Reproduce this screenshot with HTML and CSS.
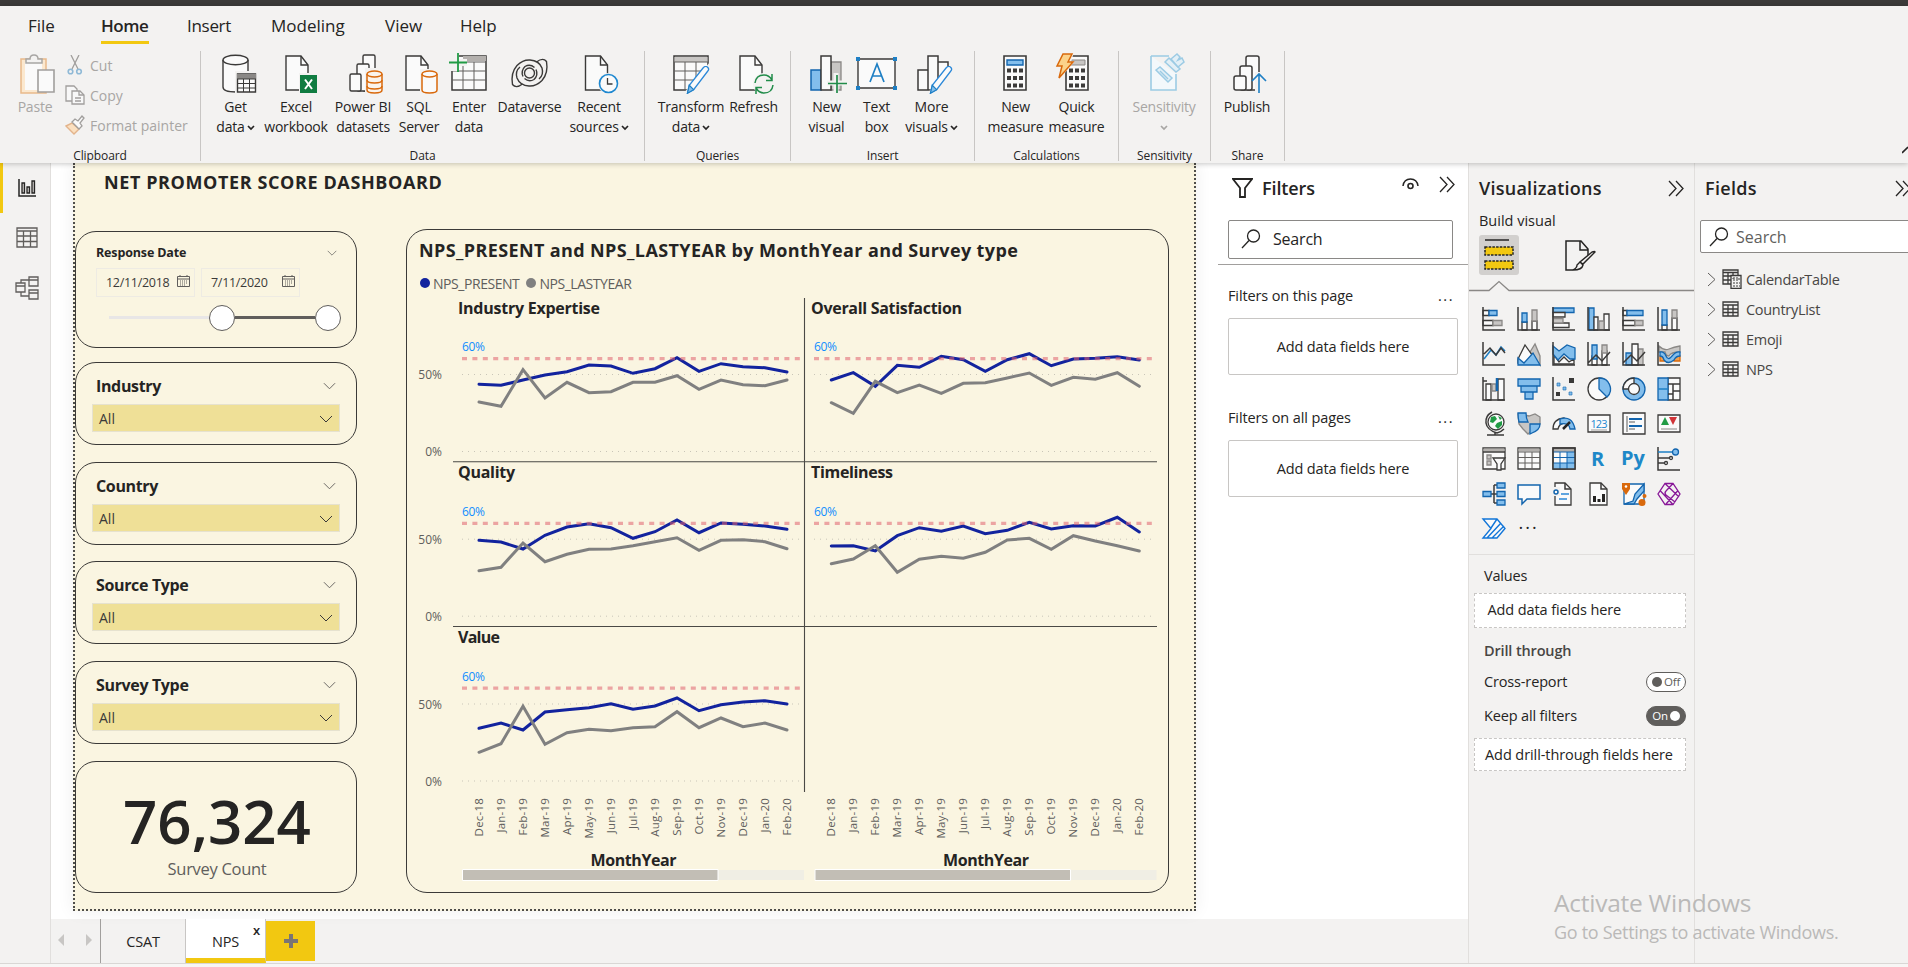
FILE: index.html
```html
<!DOCTYPE html>
<html lang="en">
<head>
<meta charset="utf-8">
<title>NPS report</title>
<link rel="stylesheet" href="styles.css">
</head>
<body>
<svg class="defs" width="0" height="0">
  <defs>
    <symbol id="chev" viewBox="0 0 14 8"><path d="M1 1l6 6 6-6" fill="none" stroke="currentColor"/></symbol>
    <symbol id="caret" viewBox="0 0 8 6"><path d="M1 1l3 3 3-3" fill="none" stroke="currentColor" stroke-width="1.7"/></symbol>
    <symbol id="dbl" viewBox="0 0 16 17"><path d="M1 1l7 7.500-7 7.500M8 1l7 7.500-7 7.500" fill="none" stroke="#252423" stroke-width="1.300"/></symbol>
    <symbol id="lens" viewBox="0 0 20 20"><g fill="none" stroke="#252423" stroke-width="1.300"><circle cx="12.500" cy="7" r="6"/><path d="M8 11.500L1 19"/></g></symbol>
    <symbol id="file" viewBox="0 0 24 36"><path d="M1 1h15l7 9v25H1z" fill="#fafafa" stroke="#3b3a39" stroke-width="1.400"/><path d="M16 1v9h7" fill="none" stroke="#3b3a39" stroke-width="1.400"/></symbol>
    <symbol id="cal" viewBox="0 0 13 12"><path d="M.5 1.500h12v10H.5zM.5 4h12M3 0v2M10 0v2" fill="none" stroke="#605e5c"/><path d="M3 6h8M3 8h8M3 10h6" stroke="#605e5c" stroke-dasharray="1 1"/></symbol>
    <symbol id="tbl" viewBox="0 0 17 16"><path d="M1 1h15v14H1zM1 4h15M1 8h15M1 11.500h15M6 4v11M11 4v11" fill="none" stroke="#3b3a39" stroke-width="1.300"/></symbol>
    <symbol id="expand" viewBox="0 0 9 15"><path d="M1 1l7 6.500-7 6.500" fill="none" stroke="#605e5c"/></symbol>
    <symbol id="pencil" viewBox="0 0 26 32"><path d="M1 31l2-9L19 2q3-3 5.500 0 1.500 2-.5 4L8 27z" fill="#fafafa" stroke="#2b88d8" stroke-width="1.500"/><path d="M1 31l2-9 5 5z" fill="#83beec" stroke="#1e7fc4" stroke-width="1.300"/></symbol>
    <symbol id="calc" viewBox="0 0 24 36"><path d="M1 1h22v34H1z" fill="#fafafa" stroke="#3b3a39" stroke-width="1.600"/><path d="M4 15.500h16M4 23h16M4 30.500h16" stroke="#3b3a39" stroke-width="4" stroke-dasharray="4 2"/></symbol>
  </defs>
</svg>
<div class="app">
  <div class="titlebar"></div>
  <header class="ribbon">
    <nav class="menu">
      <span class="m-file">File</span><span class="m-home">Home</span><span class="m-insert">Insert</span><span class="m-model">Modeling</span><span class="m-view">View</span><span>Help</span>
    </nav>
    <div class="groups">
      <section class="group g-clip">
        <div class="tools">
          <div class="tool t-paste dim"><svg class="ico" viewBox="0 0 44 44"><path d="M8 9h25v34H8z" fill="#fbe8cf" stroke="#e9b98b" stroke-width="1.500"/><path d="M12 12h17v28H12z" fill="#fafafa"/><path d="M13 13V9h4q0-4 4-4t4 4h4v4z" fill="#f3f2f1" stroke="#a8a6a4" stroke-width="1.500"/><path d="M25 20h16v22H25z" fill="#fafafa" stroke="#a19f9d" stroke-width="1.600"/></svg><span>Paste</span></div>
          <div class="clip-list dim">
            <div><svg viewBox="0 0 20 20"><g fill="none" stroke="#a19f9d" stroke-width="1.300"><path d="M6 0l7 14M14 0L7 14"/><g stroke="#8fb9d6" stroke-width="1.600"><circle cx="5.500" cy="16.500" r="2.300"/><circle cx="14" cy="16.500" r="2.300"/></g></g></svg>Cut</div>
            <div><svg viewBox="0 0 20 20"><g fill="#f8f8f8" stroke="#a19f9d" stroke-width="1.300"><path d="M1 1h8l3 3v12H1z"/><path d="M7 6h8l4 4v9H7z"/><path d="M14 6v4h5M10 13h6M10 16h6" fill="none"/></g></svg>Copy</div>
            <div><svg viewBox="0 0 20 20"><path d="M1 11l6-3 7 6-5 5z" fill="#fbe0c0" stroke="#e3b48c" stroke-width="1.400"/><path d="M7 7l3-3 3 2 4-5 2 2-4 5 2 3-3 3z" fill="#fafafa" stroke="#a19f9d" stroke-width="1.300"/></svg>Format painter</div>
          </div>
        </div>
        <div class="glabel">Clipboard</div>
      </section>
      <section class="group g-data">
        <div class="tools">
          <div class="tool w53"><svg class="ico" viewBox="0 0 44 44"><path d="M9 10v27q0 5 13 5 12 0 12-5V10" fill="#fafafa" stroke="#3b3a39" stroke-width="1.400"/><ellipse cx="21.500" cy="10" rx="12.500" ry="4.700" fill="#fafafa" stroke="#3b3a39" stroke-width="1.400"/><path d="M21 21h24v23H21z" fill="#f3f2f1"/><path d="M23.500 24h18v18h-18z" fill="#fafafa" stroke="#3b3a39" stroke-width="1.400"/><path d="M23 24h19v5H23z" fill="#8a8886"/><path d="M23 29h19M23 33.500h19M23 38h19M29.500 29v13M35.500 29v13" stroke="#3b3a39"/></svg><span>Get<br>data<svg class="caret"><use href="#caret"/></svg></span></div>
          <div class="tool w68"><svg class="ico" viewBox="-1 0 44 44"><use href="#file" x="9" y="5" width="26" height="36"/><path d="M24 23h20v21H24z" fill="#f3f2f1"/><path d="M25 25h17v18H25z" fill="#107c41"/><path d="M30 29.500l7 9.500M37 29.500L30 39" stroke="#fff" stroke-width="2"/></svg><span>Excel<br>workbook</span></div>
          <div class="tool w66"><svg class="ico" viewBox="0 0 44 44"><g fill="#fafafa" stroke="#3b3a39" stroke-width="1.400"><rect x="22" y="5" width="12" height="36" rx="1.500"/><rect x="16" y="14" width="12" height="27" rx="1.500"/><rect x="9" y="24" width="11" height="17" rx="1.500"/></g><path d="M24 18h19v26H24z" fill="#f3f2f1"/><g fill="#faf3eb" stroke="#d9690c" stroke-width="1.500"><path d="M26 24v16q0 3 7.500 3t7.500-3V24"/><path d="M26 30q0 3 7.500 3t7.500-3M26 36q0 3 7.500 3t7.500-3" fill="none"/><ellipse cx="33.500" cy="24" rx="7.500" ry="3"/></g></svg><span>Power BI<br>datasets</span></div>
          <div class="tool w46"><svg class="ico" viewBox="1 0 44 44"><use href="#file" x="8" y="5" width="26" height="36"/><path d="M24 19h20v24H24z" fill="#f3f2f1"/><g fill="#fafafa" stroke="#d9690c" stroke-width="1.500"><path d="M26 24v16q0 3 7.500 3t7.500-3V24"/><ellipse cx="33.500" cy="24" rx="7.500" ry="3"/></g></svg><span>SQL<br>Server</span></div>
          <div class="tool w54"><svg class="ico" viewBox="0 0 44 44"><path d="M5 6h34v34H5z" fill="#fafafa" stroke="#3b3a39" stroke-width="1.500"/><path d="M16 6h23v5H16z" fill="#b3b0ad"/><path d="M5 21h34M5 30h34M16 12v28M27 12v28M5 12h34" fill="none" stroke="#605e5c"/><path d="M2 3h10v18H2zM2 9h18v7H2z" fill="#f3f2f1"/><path d="M11 3v19M2 12.500h18" stroke="#219b45" stroke-width="1.800"/></svg><span>Enter<br>data</span></div>
          <div class="tool w67"><svg class="ico" viewBox="0 0 44 44"><g fill="none" stroke="#3b3a39" stroke-width="1.400"><g id="swirl"><path d="M14.500 34Q8 39 4.500 34.500 2.500 23 9 15.500 15 9.500 22 10 31 10.500 34 18 36 25 31 29"/><path d="M15 26.500Q12.500 21 17 16.500q5-3 9.500 1"/></g><use href="#swirl" transform="rotate(180 21.500 23)"/><circle cx="21.500" cy="23" r="5"/></g></svg><span>Dataverse</span></div>
          <div class="tool w72"><svg class="ico" viewBox="1.500 0 44 44"><use href="#file" x="8" y="5" width="26" height="36"/><circle cx="33" cy="33.500" r="10.500" fill="#f3f2f1"/><circle cx="33" cy="33.500" r="9" fill="#fafafa" stroke="#1e88d0" stroke-width="1.600"/><path d="M32 28v6h5" fill="none" stroke="#3b3a39" stroke-width="1.300"/></svg><span>Recent<br>sources<svg class="caret"><use href="#caret"/></svg></span></div>
        </div>
        <div class="glabel">Data</div>
      </section>
      <section class="group g-query">
        <div class="tools">
          <div class="tool w68"><svg class="ico" viewBox="0 0 44 44"><path d="M5 6h34v34H5z" fill="#fafafa" stroke="#3b3a39" stroke-width="1.500"/><path d="M5.500 7h33v5h-33z" fill="#c8c6c4"/><path d="M5 12h34M5 21h34M5 30h34M16 12v28M27 12v28" stroke="#605e5c"/><path d="M14 44L41 12v32z" fill="#f3f2f1"/><use href="#pencil" x="16" y="16" width="26" height="28"/></svg><span>Transform<br>data<svg class="caret"><use href="#caret"/></svg></span></div>
          <div class="tool w57"><svg class="ico" viewBox="0 0 44 44"><use href="#file" x="6" y="5" width="26" height="36"/><circle cx="32" cy="34" r="11" fill="#f3f2f1"/><g fill="none" stroke="#218c4a" stroke-width="1.500"><path d="M23 33q1-8 9-8 5 0 8 5M40 24v6.500h-6M41 35q-1 8-9 8-5 0-8-5M24 44v-6.500h6"/></g></svg><span>Refresh</span></div>
        </div>
        <div class="glabel">Queries</div>
      </section>
      <section class="group g-insert">
        <div class="tools">
          <div class="tool w51"><svg class="ico" viewBox="0 0 44 44"><path d="M6 20h10v20H6z" fill="#83beec" stroke="#1365ae" stroke-width="1.500"/><path d="M26 12h10v28H26z" fill="#c8c6c4" stroke="#8a8886" stroke-width="1.300"/><path d="M16 6h10v34H16z" fill="#fafafa" stroke="#3b3a39" stroke-width="1.500"/><path d="M31 23v20M22 33h19" stroke="#f3f2f1" stroke-width="5"/><path d="M32 25v18M23 33.500h19" stroke="#218c4a" stroke-width="1.700"/></svg><span>New<br>visual</span></div>
          <div class="tool w49"><svg class="ico" viewBox="0 0 44 44"><path d="M3 9h37v29H3z" fill="#fafafa" stroke="#3b3a39" stroke-width="1.400"/><path d="M1 7h4v4H1zM38 7h4v4h-4zM1 36h4v4H1zM38 36h4v4h-4z" fill="#1e7fc4"/><path d="M15 32l7-18 7 18M17 26h10" fill="none" stroke="#1e7fc4" stroke-width="1.700"/></svg><span>Text<br>box</span></div>
          <div class="tool w61"><svg class="ico" viewBox="-1 0 44 44"><path d="M7 20h10v20H7zM27 12h10v28H27zM17 6h10v34H17z" fill="#fafafa" stroke="#3b3a39" stroke-width="1.500"/><path d="M16 44L42 12v32z" fill="#f3f2f1"/><use href="#pencil" x="17" y="16" width="26" height="28"/></svg><span>More<br>visuals<svg class="caret"><use href="#caret"/></svg></span></div>
        </div>
        <div class="glabel">Insert</div>
      </section>
      <section class="group g-calc">
        <div class="tools">
          <div class="tool w61"><svg class="ico" viewBox="1 0 44 44"><use href="#calc" x="9" y="5" width="26" height="36"/><path d="M14 10h16v5H14z" fill="#83beec" stroke="#1365ae" stroke-width="1.400"/></svg><span>New<br>measure</span></div>
          <div class="tool w61"><svg class="ico" viewBox="0 0 44 44"><use href="#calc" x="9" y="5" width="26" height="36"/><path d="M14 10h16v5H14z" fill="#c8c6c4" stroke="#8a8886"/><path d="M5 2h14l-3 10h3L3 31H1z" fill="#f3f2f1"/><path d="M8 4h9l-4 8h5L4 28l3-12H2z" fill="#fbd28a" stroke="#d9690c" stroke-width="1.500"/></svg><span>Quick<br>measure</span></div>
        </div>
        <div class="glabel">Calculations</div>
      </section>
      <section class="group g-sens">
        <div class="tools">
          <div class="tool w70 dim"><svg class="ico" viewBox="0 0 44 44"><path d="M9 6h18M9 6v34h25V24" fill="#f3f8fb" stroke="#9ccbe4" stroke-width="1.600"/><g fill="#e2eff6" stroke="#9ccbe4" stroke-width="1.500"><path d="M23 12l4-4 11 11-4 3z"/><path d="M29 9l6-5 3 3-2 3 4-2 2 4-6 5z"/><path d="M14 20l4-3 12 11-4 4z"/><path d="M18 21l8 8" /></g></svg><span>Sensitivity<br><svg class="caret"><use href="#caret"/></svg></span></div>
        </div>
        <div class="glabel">Sensitivity</div>
      </section>
      <section class="group g-share">
        <div class="tools">
          <div class="tool w56"><svg class="ico" viewBox="-2 0 44 44"><g fill="#fafafa" stroke="#3b3a39" stroke-width="1.500"><rect x="19" y="6" width="13" height="34" rx="2"/><rect x="13" y="16" width="12" height="24" rx="2"/><rect x="7" y="26" width="12" height="14" rx="2"/></g><path d="M28 22h13v20H28z" fill="#f3f2f1"/><path d="M32 43V24M25 31l7-7 7 7" fill="none" stroke="#1e7fc4" stroke-width="1.600"/></svg><span>Publish</span></div>
        </div>
        <div class="glabel">Share</div>
      </section>
      <svg class="collapse" viewBox="0 0 6 8"><path d="M0 7l6-6" fill="none" stroke="#252423" stroke-width="1.600"/></svg>
    </div>
  </header>

  <div class="main">
    <aside class="rail">
      <div class="rail-item active"><svg width="18" height="18" viewBox="0 0 18 18"><path d="M1 0v17h17" fill="none" stroke="#252423" stroke-width="1.500"/><path d="M4 4h2.500v10H4zM9 8h2.500v6H9zM14 2h2.500v12H14z" fill="#c8c6c4" stroke="#252423" stroke-width="1.300"/></svg></div>
      <div class="rail-item up"><svg width="22" height="21" viewBox="0 0 22 21"><path d="M1 1h20v19H1zM1 4h20M1 9h20M1 14.500h20M7.500 4v16M14.500 4v16" fill="none" stroke="#605e5c" stroke-width="1.300"/></svg></div>
      <div class="rail-item"><svg width="24" height="24" viewBox="0 0 24 24"><path d="M1 7h9v9H1zM14 1h9v9h-9zM14 14h9v9h-9zM1 10h9M14 4h9M14 17h9M6 7V4h8M6 16v4h8" fill="none" stroke="#605e5c" stroke-width="1.300"/></svg></div>
    </aside>

    <div class="work">
      <div class="upper">
        <div class="canvas">
          <div class="page">
            <h1>NET PROMOTER SCORE DASHBOARD</h1>
            <div class="board">
              <div class="slicers">
                <div class="card date">
                  <div class="head small"><b>Response Date</b><svg width="10" height="6"><use href="#chev"/></svg></div>
                  <div class="dates"><div>12/11/2018<svg width="13" height="12"><use href="#cal"/></svg></div><div>7/11/2020<svg width="13" height="12"><use href="#cal"/></svg></div></div>
                  <div class="slider"><i class="track"></i><i class="knob"></i><i class="range"></i><i class="knob"></i></div>
                </div>
                <div class="card drop"><div class="head"><b>Industry</b><svg width="13" height="8"><use href="#chev"/></svg></div><div class="select">All<svg width="14" height="8"><use href="#chev"/></svg></div></div>
                <div class="card drop c2"><div class="head"><b>Country</b><svg width="13" height="8"><use href="#chev"/></svg></div><div class="select">All<svg width="14" height="8"><use href="#chev"/></svg></div></div>
                <div class="card drop c3"><div class="head"><b>Source Type</b><svg width="13" height="8"><use href="#chev"/></svg></div><div class="select">All<svg width="14" height="8"><use href="#chev"/></svg></div></div>
                <div class="card drop c4"><div class="head"><b>Survey Type</b><svg width="13" height="8"><use href="#chev"/></svg></div><div class="select">All<svg width="14" height="8"><use href="#chev"/></svg></div></div>
                <div class="card count"><div class="num">76,324</div><div class="cap">Survey Count</div></div>
              </div>
              <div class="card chart">
                <h2>NPS_PRESENT and NPS_LASTYEAR by MonthYear and Survey type</h2>
                <div class="legend"><i class="dot blue"></i><span>NPS_PRESENT</span><i class="dot grey"></i><span>NPS_LASTYEAR</span></div>
                <svg class="plot" width="761" height="595" viewBox="407 297 761 595">
                  <defs>
                    <g id="grid"><path d="M462 374.500H802M462 451.500H802" stroke="#c9c5b8" stroke-dasharray="1 5"/><text class="ref" x="462" y="351" textLength="23">60%</text></g>
                    <path id="goal" d="M462 358.700H802" stroke="#e06070" stroke-opacity=".55" stroke-width="3.300" stroke-dasharray="5 5.400"/>
                    <g id="ylab" class="ylab"><text x="442" y="379">50%</text><text x="442" y="456">0%</text></g>
                    <g id="months" class="months">
                      <text transform="translate(483 798) rotate(-90)">Dec-18</text><text transform="translate(505 798) rotate(-90)">Jan-19</text><text transform="translate(527 798) rotate(-90)">Feb-19</text><text transform="translate(549 798) rotate(-90)">Mar-19</text><text transform="translate(571 798) rotate(-90)">Apr-19</text><text transform="translate(593 798) rotate(-90)">May-19</text><text transform="translate(615 798) rotate(-90)">Jun-19</text><text transform="translate(637 798) rotate(-90)">Jul-19</text><text transform="translate(659 798) rotate(-90)">Aug-19</text><text transform="translate(681 798) rotate(-90)">Sep-19</text><text transform="translate(703 798) rotate(-90)">Oct-19</text><text transform="translate(725 798) rotate(-90)">Nov-19</text><text transform="translate(747 798) rotate(-90)">Dec-19</text><text transform="translate(769 798) rotate(-90)">Jan-20</text><text transform="translate(791 798) rotate(-90)">Feb-20</text>
                    </g>
                    <g id="scroll"><path d="M462 870h342v10H462z" fill="#f0eee4"/><path d="M462.500 869.500h255.500v11H462.500z" fill="#c2beb5" stroke="#fff"/></g>
                  </defs>
                  <use href="#grid"/><use href="#grid" x="352"/><use href="#grid" y="164.700"/><use href="#grid" x="352" y="164.700"/><use href="#grid" y="329.500"/>
                  <use href="#ylab"/><use href="#ylab" y="164.700"/><use href="#ylab" y="329.500"/>
                  <path d="M453 461.700H1157M453 626.500H1157M804.500 298V792" stroke="#4a4945" stroke-width="1.100"/>
                  <g class="line now">
                    <polyline points="479,384.300 501,385.300 523,380 545,375 567,371.700 589,365 611,366 633,373.300 655,368.700 677,357.700 699,371.300 721,363.700 743,366.700 765,367.700 787,372"/>
                    <polyline points="831.300,380 853.300,372.700 875.300,386.300 897.300,365.300 919.300,367.300 941.300,356.300 963.300,359.700 985.300,371.300 1007.300,359.700 1029.300,353.700 1051.300,365.700 1073.300,359 1095.300,358.300 1117.300,356.700 1139.300,360"/>
                    <polyline points="479,540.300 501,542 523,549 545,535.300 567,527 589,523.700 611,527.700 633,538.300 655,531.700 677,520 699,532.700 721,523 743,524.300 765,526 787,529.300"/>
                    <polyline points="831.300,546 853.300,545.700 875.300,551 897.300,535.700 919.300,527.700 941.300,531.300 963.300,526 985.300,533.700 1007.300,530.300 1029.300,522.300 1051.300,529 1073.300,525.700 1095.300,526 1117.300,517.300 1139.300,532"/>
                    <polyline points="479,728.300 501,723 523,730 545,712 567,709.700 589,707.700 611,703.700 633,709.300 655,706 677,698 699,710.700 721,704.700 743,702 765,700.700 787,704"/>
                  </g>
                  <g class="line last">
                    <polyline points="479,402 501,406.300 523,369.700 545,398 567,382.300 589,392.700 611,391.700 633,382.300 655,382.300 677,375.700 699,389.300 721,380 743,384.700 765,385.700 787,380"/>
                    <polyline points="831.300,402.700 853.300,413.300 875.300,381.300 897.300,392.700 919.300,385 941.300,393.300 963.300,383.300 985.300,382.700 1007.300,378 1029.300,373 1051.300,385.300 1073.300,377.300 1095.300,379.300 1117.300,372.700 1139.300,386.300"/>
                    <polyline points="479,570.700 501,567.300 523,543 545,561.700 567,554.300 589,549.300 611,549 633,545.700 655,541.700 677,537.700 699,550.300 721,540.300 743,539.700 765,541.700 787,548.700"/>
                    <polyline points="831.300,563.700 853.300,559 875.300,545.700 897.300,572.300 919.300,559.300 941.300,556.300 963.300,558.300 985.300,552.300 1007.300,540 1029.300,538.300 1051.300,549.300 1073.300,535.700 1095.300,541 1117.300,545.700 1139.300,551"/>
                    <polyline points="479,752.300 501,743.700 523,706.300 545,744.300 567,732.700 589,729.300 611,730.700 633,727.700 655,726.700 677,711.700 699,727.700 721,718 743,726.700 765,723 787,730"/>
                  </g>
                  <use href="#goal"/><use href="#goal" x="352"/><use href="#goal" y="164.700"/><use href="#goal" x="352" y="164.700"/><use href="#goal" y="329.500"/>
                  <g class="ptitle"><text x="458" y="314" textLength="142">Industry Expertise</text><text x="811" y="314" textLength="151">Overall Satisfaction</text><text x="458" y="478" textLength="57">Quality</text><text x="811" y="478" textLength="82">Timeliness</text><text x="458" y="643" textLength="42">Value</text><text x="590.500" y="866" textLength="86">MonthYear</text><text x="943" y="866" textLength="86">MonthYear</text></g>
                  <use href="#months"/><use href="#months" x="352"/>
                  <use href="#scroll"/><use href="#scroll" x="352.500"/>
                </svg>
              </div>
            </div>
          </div>
        </div>
        <aside class="filters">
          <div class="pane-head"><svg width="21" height="20" viewBox="0 0 21 20"><path d="M1 1h19l-7 9v9H8v-9z" fill="none" stroke="#252423" stroke-width="1.800"/></svg><b>Filters</b><svg class="eye" width="17" height="13" viewBox="0 0 17 13"><path d="M1 8Q2 1 8.500 1T16 8" fill="none" stroke="#252423" stroke-width="1.500"/><circle cx="8.500" cy="8" r="2.500" fill="none" stroke="#252423" stroke-width="1.600"/></svg><svg class="fold" width="16" height="17"><use href="#dbl"/></svg></div>
          <div class="search"><svg width="20" height="20"><use href="#lens"/></svg>Search</div>
          <div class="rule"></div>
          <div class="fhead">Filters on this page<span>...</span></div>
          <div class="well">Add data fields here</div>
          <div class="fhead second">Filters on all pages<span>...</span></div>
          <div class="well">Add data fields here</div>
        </aside>
      </div>
      <footer class="tabs">
        <div class="arrows"><svg width="6" height="12"><path d="M6 0v12L0 6z" fill="#c8c6c4"/></svg><svg width="6" height="12"><path d="M0 0v12l6-6z" fill="#c8c6c4"/></svg></div>
        <div class="tab csat">CSAT</div><div class="tab nps">NPS<i>x</i></div><div class="add"><svg width="14" height="14"><path d="M7 0v14M0 7h14" stroke="#7a7574" stroke-width="4"/></svg></div>
      </footer>
    </div>

    <aside class="viz">
      <div class="pane-head"><b>Visualizations</b><svg class="fold" width="16" height="17"><use href="#dbl"/></svg></div>
      <div class="build">Build visual</div>
      <div class="modes">
        <div class="mode"><svg width="30" height="32" viewBox="0 0 30 32"><path d="M1 1h24" stroke="#252423" stroke-width="1.500"/><path d="M1 8h28v8H1zM1 22h28v8H1z" fill="#f2c811" stroke="#252423" stroke-width="1.500" stroke-dasharray="2.500 1.200"/></svg></div>
        <svg width="32" height="31" viewBox="0 0 32 31"><path d="M23 15V9l-7-8H1v29h7M15 1v9h8" fill="none" stroke="#252423" stroke-width="1.500"/><path d="M30 12L18 24l-3-2 12-10q3-1 3 0zM15 22l3 3q-1 5-10 5 4-2 4-5z" fill="#f3f2f1" stroke="#252423" stroke-width="1.400"/></svg>
      </div>
      <svg class="notch" width="225" height="12" viewBox="0 0 225 12"><path d="M0 10.500h20l10-9 10 9h185" fill="none" stroke="#8a8886" stroke-width="1.300"/></svg>
      <div class="gallery">
        <svg viewBox="0 0 24 24"><path class="w" d="M1 3.500h6v5H1zM1 13.500h10v5H1z"/><path class="b" d="M7 3.500h8v5H7z"/><path class="g" d="M11 13.500h9v5h-9z"/><path class="a" d="M1 0v23h22"/></svg>
        <svg viewBox="0 0 24 24"><path class="w" d="M5 15h5v8H5zM15 14h5v9h-5z"/><path class="b" d="M5 6h5v9H5z"/><path class="g" d="M15 3h5v11h-5z"/><path class="a" d="M1 0v23h22"/></svg>
        <svg viewBox="0 0 24 24"><path class="b" d="M1 1h21v4.500H1z"/><path class="w" d="M1 5.500h12v4.500H1zM1 16h16v4.500H1z"/><path class="g" d="M1 11.500h10V16H1z"/><path class="a" d="M1 0v23h22"/></svg>
        <svg viewBox="0 0 24 24"><path class="b" d="M2 1h5v22H2z"/><path class="w" d="M7 10h4v13H7zM17 7h5v16h-5z"/><path class="g" d="M12 14h5v9h-5z"/><path class="a" d="M1 0v23h22"/></svg>
        <svg viewBox="0 0 24 24"><path class="w" d="M1 3.500h4v5H1zM1 13.500h12v5H1z"/><path class="b" d="M5 3.500h16v5H5z"/><path class="g" d="M13 13.500h8v5h-8z"/><path class="a" d="M1 0v23h22"/></svg>
        <svg viewBox="0 0 24 24"><path class="w" d="M5 18h5v5H5zM15 11h5v12h-5z"/><path class="b" d="M5 3h5v15H5z"/><path class="g" d="M15 3h5v8h-5z"/><path class="a" d="M1 0v23h22"/></svg>

        <svg viewBox="0 0 24 24"><path class="bl" d="M2 17l7-9 5 5 5-8 4 4"/><path class="a" d="M1 0v23h22M2 12l6-6 6 7 5-7 4 5" /></svg>
        <svg viewBox="0 0 24 24"><path class="g" d="M13 10l5-8 5 12v9z"/><path class="w" d="M1 17L8 3l7 10-6 8H1z"/><path class="b" d="M1 23v-7l6 5 9-10 7 12z"/></svg>
        <svg viewBox="0 0 24 24"><path class="w" d="M2 13l5 7 5-5 5 5 5-3v5H2z" stroke="none"/><path class="b" d="M1 4l6 5 8-6 8 3v11l-5 0-6-5-6 6-5-6z"/><path class="a" d="M1 0v23h22"/></svg>
        <svg viewBox="0 0 24 24"><path class="w" d="M5 14h5v9H5zM15 9h5v14h-5z"/><path class="b" d="M5 3h5v14H5z"/><path class="g" d="M15 3h5v8h-5z"/><path class="a" d="M1 0v23h22M1 21l8-8 6 6 8-9"/></svg>
        <svg viewBox="0 0 24 24"><path class="b" d="M4 11h6v12H4z"/><path class="g" d="M16 7h5v16h-5z"/><path class="w" d="M10 2h6v21h-6z"/><path class="a" d="M1 0v23h22M1 21l8-8 6 6 8-9"/></svg>
        <svg viewBox="0 0 24 24"><path class="g" d="M2 4q5 5 10 3t11-3v6q-9 0-11 4-3 0-4-4H2z"/><path d="M3 14h6v5H3zM17 14h6v5h-6z" fill="#f0a050" stroke="#d9690c" stroke-width="1.300"/><path class="b" d="M3 10q4-1 6 4t6 0 8-4v4q-4 0-6 4-6 5-10 0-1-4-4-4z"/><path class="a" d="M1 0v23h22"/></svg>

        <svg viewBox="0 0 24 24"><path class="w" d="M4 7h5v16H4zM16 2h6v21h-6z"/><path class="g" d="M10 7h4v7h-4z"/><path d="M15 1v13" stroke="#1365ae" stroke-width="2.500"/><path class="a" d="M1 0v23h22M1 4h4"/></svg>
        <svg viewBox="0 0 24 24"><path class="b" d="M1 2h22v7H1zM4 9h16v6H4zM8 15h8v7H8z"/></svg>
        <svg viewBox="0 0 24 24"><path d="M17 1h5v5h-5zM4 15h4v4H4z" fill="#3b3a39"/><path class="b thin" d="M5 6h3v3H5zM11 10h3v3h-3zM17 15h3v3h-3z"/><path class="a" d="M1 0v23h22"/></svg>
        <svg viewBox="0 0 24 24"><circle class="w" cx="12" cy="12" r="11"/><path class="b" d="M12 1v11l8 8A11 11 0 0 0 12 1z"/></svg>
        <svg viewBox="0 0 24 24"><circle class="b" cx="12" cy="12" r="11"/><path class="w" d="M12 1A11 11 0 0 0 1 12h6a5 5 0 0 1 5-5z"/><circle class="w" cx="12" cy="12" r="5.500"/></svg>
        <svg viewBox="0 0 24 24"><path class="w" d="M11 1h12v22H11z"/><path class="b" d="M1 1h10v22H1z"/><path class="bl" d="M1 12h10"/><path class="a" d="M11 7h12M16 7v16M16 14h7M11 17h5"/></svg>

        <svg viewBox="0 0 24 24"><circle class="w" cx="14" cy="10" r="8"/><path d="M9 5l4-1 2 3-4 4-3-1zM15 11l5-2v4l-4 4-3-3zM16 4l4 2-2 2z" fill="#219b45"/><path class="a" d="M10 0Q3 4 4 11t11 10q4-1 7-4M13 20v3M5 23h17"/></svg>
        <svg viewBox="0 0 24 24"><path class="g" d="M1 2l6 1 5 1 6-2 5 3v7l-5 4-7 6-5-5-4-5z"/><path class="b" d="M1 1h8q0 5 2 9H2Q1 6 1 1zM13 12h10q0 6-8 9l-2 1z"/></svg>
        <svg viewBox="0 0 24 24"><path class="w" d="M1 17Q1 7 12 6v5q-5 1-6 6z"/><path class="b" d="M8 7Q20 3 23 17h-5q-1-7-10-5z"/><path d="M11 17l7-7" stroke="#252423" stroke-width="2.500"/></svg>
        <svg viewBox="0 0 24 24"><path class="w" d="M1 3h22v17H1z"/><text x="3.500" y="15.500" class="n" textLength="17">123</text><path d="M4 18h16" stroke="#a19f9d"/></svg>
        <svg viewBox="0 0 24 24"><path class="w" d="M1 1h22v21H1z"/><path d="M5 4v16M7 10h6M7 17h6" stroke="#605e5c"/><path d="M7 7h13M7 14h13" stroke="#1365ae" stroke-width="2"/></svg>
        <svg viewBox="0 0 24 24"><path class="w" d="M1 3h22v17H1z"/><path d="M4 13l4-8 4 8z" fill="#219b45"/><path d="M12 5h8l-4 8z" fill="#d13438"/><path d="M4 17h16" stroke="#8a8886"/></svg>

        <svg viewBox="0 0 24 24"><path class="w" d="M1 1h22v21H1z"/><path d="M1.500 1.500h21v3h-21z" fill="#b3b0ad"/><path class="g" d="M5 8h4v4H5zM5 14h4v4H5z"/><path class="a" d="M1 5h22"/><path class="w" d="M11 11h12l-4 6v6h-4v-6z"/></svg>
        <svg viewBox="0 0 24 24"><path class="w" d="M1 1h22v21H1z"/><path d="M1.500 1.500h21v3h-21z" fill="#b3b0ad"/><path d="M1 5h22M1 10.500h22M1 16h22M8 5v17M15 5v17" stroke="#605e5c"/></svg>
        <svg viewBox="0 0 24 24"><path class="w" d="M1 1h22v21H1z"/><path d="M2 2h20v3H2z" fill="#b3b0ad"/><path d="M15 5h8v17H1v-6h14z" fill="#83beec"/><path d="M1 5h22M1 10.500h22M1 16h22M8 5v17M15 5v17" stroke="#1365ae"/><path class="a" d="M1 1h22v21H1z"/></svg>
        <svg viewBox="0 0 24 24"><text x="4" y="19" class="r" textLength="12">R</text></svg>
        <svg viewBox="0 0 24 24"><text x="-1" y="18" class="r" textLength="24">Py</text></svg>
        <svg viewBox="0 0 24 24"><path class="a" d="M1 0v23h22M1 11h12M1 16h7"/><path class="bl" d="M1 5h15"/><circle class="b" cx="18.500" cy="5" r="3"/><circle class="w" cx="14" cy="11" r="1.500"/><circle class="w" cx="9" cy="16" r="1.500"/></svg>

        <svg viewBox="0 0 24 24"><path class="a" d="M9 12h6M12 3v18M12 3h4M12 21h4"/><path class="b" d="M1 9.500h8v5H1zM15 1h8v5h-8zM15 9.500h8v5h-8zM15 18h8v5h-8z"/></svg>
        <svg viewBox="0 0 24 24"><path d="M1 3h22v14H10l-5 5v-5H1z" fill="#fafafa" stroke="#1365ae" stroke-width="1.500"/></svg>
        <svg viewBox="0 0 24 24"><path class="w" d="M3 1h10l6 6v16H3z"/><path class="a" d="M13 1v6h6"/><path d="M0 5h8v9H0z" fill="#f3f2f1"/><circle cx="4" cy="10" r="2" fill="#fafafa" stroke="#1365ae" stroke-width="1.500"/><path d="M9 12h8M7 17h8" stroke="#2b88d8" stroke-width="1.300"/></svg>
        <svg viewBox="0 0 24 24"><path class="w" d="M3 1h11l6 6v16H3z"/><path class="a" d="M14 1v6h6"/><path d="M6 14h3v6H6zM10.500 17h3v3h-3zM15 12h3v8h-3z" fill="#252423"/></svg>
        <svg viewBox="0 0 24 24"><path d="M2 2h20v20H2z" fill="#fafafa" stroke="#1365ae" stroke-width="1.300"/><path class="b" d="M2 22l9-3 2-7 9-10v7l-7 8-3 5z"/><path d="M0 1h8v6l-4 6-4-6z" fill="#d9690c"/><circle cx="4" cy="4.500" r="1.300" fill="#fff"/><circle cx="20" cy="20.500" r="3.500" fill="#d9690c"/><circle cx="22.500" cy="14" r="2" fill="#d9690c"/></svg>
        <svg viewBox="0 0 24 24"><path d="M8 1.500h8L23 12l-7 10.500H8L1 12zM8 1.500L22 15M16 1.500L9 9q-2 2 0 4l9 7M3.500 9L16 22.500M21 8.500L9 22" fill="none" stroke="#881798" stroke-width="1.300"/></svg>

        <svg viewBox="0 0 24 24"><path d="M1 2h14l8 9.500-8 9.500H1l8-9.500zM5 21L19 6M10 21L22 9M9 11l6-9" fill="#fafafa" stroke="#1175d8" stroke-width="1.400"/></svg>
        <span class="more">···</span>
      </div>
      <div class="wells">
        <div class="vl">Values</div>
        <div class="drag">Add data fields here</div>
        <div class="vl drill">Drill through</div>
        <div class="trow">Cross-report<span class="toggle"><i></i>Off</span></div>
        <div class="trow">Keep all filters<span class="toggle on">On<i></i></span></div>
        <div class="drag last">Add drill-through fields here</div>
      </div>
    </aside>

    <aside class="fields">
      <div class="pane-head"><b>Fields</b><svg class="fold" width="16" height="17"><use href="#dbl"/></svg></div>
      <div class="search"><svg width="20" height="20"><use href="#lens"/></svg>Search</div>
      <ul>
        <li><svg width="9" height="15"><use href="#expand"/></svg><svg width="20" height="20" viewBox="0 0 20 20"><path d="M1 1h15v14H1zM1 3.500h15M1 7h8M1 11h8M6 4v11M11 4v3" fill="none" stroke="#3b3a39" stroke-width="1.300"/><path d="M9 6.500h10v13H9z" fill="#f3f2f1" stroke="#3b3a39" stroke-width="1.300"/><path d="M11 9h6v2h-6zM11 14h7M11 17h7" fill="none" stroke="#3b3a39" stroke-dasharray="2 1"/></svg>CalendarTable</li>
        <li><svg width="9" height="15"><use href="#expand"/></svg><svg width="20" height="16"><use href="#tbl" width="17" height="16"/></svg>CountryList</li>
        <li><svg width="9" height="15"><use href="#expand"/></svg><svg width="20" height="16"><use href="#tbl" width="17" height="16"/></svg>Emoji</li>
        <li><svg width="9" height="15"><use href="#expand"/></svg><svg width="20" height="16"><use href="#tbl" width="17" height="16"/></svg>NPS</li>
      </ul>
    </aside>
  </div>
  <div class="status"></div>
  <div class="watermark"><div class="wm1">Activate Windows</div><div class="wm2">Go to Settings to activate Windows.</div></div>
</div>
</body>
</html>
```

FILE: styles.css
```css
* { box-sizing: border-box; }
html, body { margin: 0; height: 100%; overflow: hidden; }
body { font-family: "Open Sans", "Noto Sans", sans-serif; color: #252423; background: #f3f2f1; font-size: 14px; }
svg { display: block; flex: none; }
.defs { position: absolute; }
b { font-weight: 600; }
i { font-style: normal; }
.app { display: flex; flex-direction: column; width: 1908px; height: 967px; overflow: hidden; position: relative; }
.titlebar { height: 6px; background: #3b3a39; }

/* ribbon */
.ribbon { height: 157px; background: #f3f2f1; box-shadow: 0 1px 5px rgba(0,0,0,.22); position: relative; z-index: 2; }
.menu { display: flex; height: 38px; padding-left: 28px; font-size: 17px; line-height: 39px; }
.menu span { display: block; }
.menu .m-file { width: 73px; }
.menu .m-home { width: 48px; margin-right: 38px; font-weight: 600; letter-spacing: -.45px; border-bottom: 3px solid #f2c811; }
.menu .m-insert { width: 84px; letter-spacing: -.3px; }
.menu .m-model { width: 114px; }
.menu .m-view { width: 75px; }
.groups { display: flex; height: 119px; padding: 7px 0 2px; }
.group { display: flex; flex-direction: column; border-right: 1px solid #c8c6c4; }
.tools { display: flex; height: 93px; }
.tool { text-align: center; line-height: 20px; letter-spacing: -.2px; white-space: nowrap; }
.tool > span { display: block; margin-top: 3px; }
.tool .ico { width: 44px; height: 44px; margin: -1px auto 0; overflow: visible; }
.caret { display: inline-block; width: 8px; height: 6px; margin-left: 2px; vertical-align: 1px; }
.dim { color: #a8a6a4; }
.glabel { text-align: center; font-size: 12px; line-height: 20px; letter-spacing: -.1px; padding-top: 3px; margin-bottom: -5px; }
.g-clip { width: 201px; }
.t-paste { width: 44px; margin-left: 13px; }
.clip-list { padding-left: 8px; margin-top: -1px; }
.clip-list div { display: flex; align-items: center; height: 30px; gap: 5px; }
.clip-list svg { width: 20px; height: 20px; }
.g-data { width: 444px; padding-left: 8px; } .g-data .glabel { margin-left: -8px; }
.g-query { width: 146px; } .g-query .tools { padding-left: 12px; }
.g-insert { width: 184px; } .g-insert .tools { padding-left: 10px; }
.g-calc { width: 144px; } .g-calc .tools { padding-left: 10px; }
.g-sens { width: 92px; } .g-sens .tools { padding-left: 10px; }
.g-share { width: 74px; } .g-share .tools { padding-left: 8px; }
.g-sens .caret { margin: 0; }
.w46 { width: 46px; } .w49 { width: 49px; } .w51 { width: 51px; } .w53 { width: 53px; } .w54 { width: 54px; } .w56 { width: 56px; }
.w57 { width: 57px; } .w61 { width: 61px; } .w66 { width: 66px; } .w67 { width: 67px; } .w68 { width: 68px; } .w70 { width: 70px; } .w72 { width: 72px; }
.collapse { width: 6px; height: 8px; margin: 95px 0 0 auto; }

.main { display: flex; height: 800px; }
.rail { width: 51px; border-right: 1px solid #e1dfdd; }
.rail-item { height: 50px; display: flex; align-items: center; justify-content: center; padding-left: 3px; }
.rail-item.up { padding-bottom: 2px; }
.rail-item.active { border-left: 3px solid #f2c811; padding-left: 0; }
.work { width: 1417px; display: flex; flex-direction: column; }
.upper { display: flex; height: 756px; background: #fff; }
.canvas { width: 1167px; padding-left: 22px; }
.page { width: 1123px; height: 748px; background: #faf5e1; border: 2px dotted #4f4e4b; border-top: 0; box-shadow: 0 0 16px rgba(0,0,0,.07); }
h1 { margin: 0 0 0 29px; font-size: 18px; font-weight: 700; line-height: 39px; height: 40px; letter-spacing: .6px; white-space: nowrap; }
.board { display: flex; }
.slicers { width: 282px; padding-top: 28px; }
.card { border: 1px solid #3b3a38; border-radius: 21px; }
.date { height: 117px; padding: 11px 19px 0 20px; }
.head { display: flex; justify-content: space-between; align-items: center; font-size: 16px; line-height: 24px; color: #252423; }
.head b { font-weight: 700; letter-spacing: -.35px; }
.head svg { color: #605e5c; }
.head.small { font-size: 12.5px; line-height: 20px; } .head.small b { letter-spacing: -.15px; }
.dates { display: flex; gap: 6px; margin-top: 5px; }
.dates div { width: 99px; height: 29px; border: 1px solid #eeebe3; display: flex; align-items: center; justify-content: space-between; padding: 0 4px 0 9px; font-size: 12.5px; letter-spacing: -.3px; color: #3b3a39; }
.dates svg { margin-bottom: 4px; }
.slider { display: flex; align-items: center; margin: 7px -5px 0 13px; height: 27px; }
.track { width: 100px; height: 3px; background: #e8e6e6; }
.range { width: 80px; height: 3px; background: #605e5c; }
.knob { width: 26px; height: 26px; border: 1.500px solid #605e5c; border-radius: 50%; background: #fff; }
.drop { height: 83px; margin-top: 14px; padding: 11px 16px 0; }
.drop.c2 { margin-top: 17px; } .drop.c3 { margin-top: 16px; } .drop.c4 { margin-top: 17px; }
.drop .head { padding: 0 4px; }
.select { display: flex; align-items: center; justify-content: space-between; height: 28px; margin-top: 6px; padding: 1px 6px 0; border: 1px solid #e6e2cf; background: #efe097; font-size: 14px; color: #3b3a39; }
.count { height: 132px; margin-top: 17px; text-align: center; padding-top: 22px; }
.num { font-size: 60px; line-height: 74px; height: 74px; font-weight: 600; margin-left: 2px; }
.cap { font-size: 16.500px; line-height: 22px; color: #605e5c; margin: 0 0 0 2px; letter-spacing: -.3px; }
.chart { width: 763px; height: 664px; margin: 26px 0 0 49px; overflow: hidden; }
h2 { margin: 0 0 0 12px; font-size: 18px; font-weight: 700; line-height: 24px; padding-top: 8px; white-space: nowrap; letter-spacing: .38px; }
.legend { display: flex; align-items: center; height: 20px; margin: 11px 0 0 13px; color: #605e5c; letter-spacing: -.45px; }
.dot { width: 10px; height: 10px; border-radius: 50%; margin-right: 3px; }
.legend span + .dot { margin-left: 7px; }
.blue { background: #12239e; } .grey { background: #808080; }
.plot { margin-top: 4px; }
.plot text { font-family: "Open Sans", sans-serif; font-size: 12px; fill: #605e5c; }
.plot .ref { fill: #118dff; }
.ylab text { text-anchor: end; }
.months text { text-anchor: end; font-size: 11.5px; letter-spacing: .2px; }
.plot .ptitle text { font-size: 16px; font-weight: 700; fill: #252423; }
.line { fill: none; stroke-width: 3; stroke-linecap: round; }
.now { stroke: #12239e; } .last { stroke: #808080; }

/* side panes */
.pane-head { display: flex; align-items: center; font-size: 18px; height: 50px; }
.filters { width: 250px; font-size: 14.500px; }
.filters .pane-head { padding-left: 14px; }
.filters .pane-head b { margin-left: 9px; width: 140px; letter-spacing: -.1px; }
.filters .eye { margin-bottom: 8px; }
.filters .fold { margin: 0 0 7px 20px; }
.search { display: flex; align-items: center; background: #fff; border: 1px solid #8a8886; border-radius: 2px; font-size: 16px; padding-bottom: 1px; }
.filters .search { width: 225px; height: 39px; margin: 7px 0 0 10px; padding-left: 12px; gap: 12px; letter-spacing: -.2px; }
.rule { height: 1px; background: #a19f9d; margin-top: 5px; }
.fhead { display: flex; justify-content: space-between; margin: 21px 14px 0 10px; line-height: 20px; letter-spacing: -.12px; }
.fhead span { letter-spacing: 1.500px; }
.fhead.second { margin-top: 33px; }
.well { width: 230px; height: 57px; margin: 12px 0 0 10px; border: 1px solid #c8c6c4; border-radius: 2px; display: flex; align-items: center; justify-content: center; letter-spacing: -.15px; }
.viz { width: 227px; border-left: 1px solid #e1dfdd; border-right: 1px solid #e1dfdd; font-size: 14.500px; }
.viz .pane-head { padding: 0 10px; justify-content: space-between; }
.viz .pane-head b { letter-spacing: .25px; }
.build { padding-left: 10px; line-height: 16px; height: 18px; font-weight: 500; }
.modes { display: flex; align-items: center; margin: 4px 0 0 10px; gap: 46px; }
.mode { width: 40px; height: 40px; background: #d2d0ce; border-radius: 3px; display: flex; align-items: center; justify-content: center; }
.notch { margin-top: 5px; }
.gallery { display: grid; grid-template-columns: repeat(6, 24px); grid-auto-rows: 24px; gap: 11px; margin: 15px 0 0 12.500px; }
.gallery svg { width: 24px; height: 24px; overflow: visible; }
.gallery .w { fill: #fafafa; stroke: #3b3a39; stroke-width: 1.300; }
.gallery .b { fill: #83beec; stroke: #1365ae; stroke-width: 1.300; }
.gallery .thin { stroke-width: .6; }
.gallery .g { fill: #c8c6c4; stroke: #8a8886; stroke-width: 1.300; }
.gallery .a { fill: none; stroke: #3b3a39; stroke-width: 1.500; }
.gallery .bl { fill: none; stroke: #1e7fc4; stroke-width: 1.500; }
.n { font-size: 11px; fill: #1e88d0; }
.r { font-size: 20px; font-weight: 700; fill: #1e88c8; }
.more { font-size: 18px; line-height: 21px; letter-spacing: 2px; margin-left: 2px; white-space: nowrap; }
.wells { margin-top: 13px; border-top: 1px solid #e1dfdd; }
.vl { padding: 11px 0 0 15px; line-height: 20px; letter-spacing: -.2px; }
.drag { width: 212px; height: 35px; margin: 7px 0 0 5px; border: 1px dashed #c8c6c4; background: #fff; padding-left: 12.500px; line-height: 32px; letter-spacing: -.1px; white-space: nowrap; }
.drill { padding-top: 13px; font-weight: 600; color: #484644; letter-spacing: -.15px; }
.trow { display: flex; justify-content: space-between; align-items: center; height: 20px; margin: 11px 8px 0 15px; letter-spacing: -.15px; line-height: 18px; }
.trow + .trow { margin-top: 14px; }
.toggle { display: flex; align-items: center; justify-content: center; gap: 2px; width: 40px; height: 20px; border: 1px solid #605e5c; border-radius: 10px; background: #fff; color: #605e5c; font-size: 11.500px; }
.toggle i { width: 10px; height: 10px; border-radius: 50%; background: #605e5c; }
.toggle.on { background: #605e5c; color: #fff; } .toggle.on i { background: #fff; }
.drag.last { margin-top: 12px; height: 33px; padding-left: 10px; letter-spacing: -.08px; }
.fields { width: 213px; overflow: hidden; }
.fields .pane-head { padding-left: 10px; width: 230px; }
.fields .pane-head b { letter-spacing: .3px; width: 60px; }
.fields .fold { margin-left: 130px; }
.fields .search { width: 240px; height: 33px; margin: 7px 0 0 5px; padding-left: 8px; gap: 7px; color: #605e5c; padding-bottom: 0; }
.fields ul { margin: 11px 0 0; padding: 0 0 0 12px; list-style: none; font-size: 14.500px; color: #484644; }
.fields li { display: flex; align-items: center; height: 30px; letter-spacing: -.3px; }
.fields li svg + svg { margin: 0 4px 0 6px; }

/* page tabs */
.tabs { display: flex; height: 44px; line-height: 45px; font-size: 14.500px; letter-spacing: -.2px; }
.arrows { width: 50px; border-right: 1px solid #a19f9d; display: flex; align-items: center; justify-content: space-between; padding: 0 8px 2px 7px; }
.tab { text-align: center; border-right: 1px solid #c8c6c4; }
.csat { width: 85px; }
.nps { width: 80px; background: #fff; border-bottom: 5px solid #f2c811; position: relative; }
.nps i { position: absolute; right: 5px; top: -11px; font-weight: 600; font-size: 13px; }
.add { width: 49px; height: 40px; margin-top: 2px; background: #f2c811; display: flex; align-items: center; justify-content: center; }
.status { height: 4px; border-top: 1px solid #d9d7d5; background: #f7f6f5; }
.watermark { position: absolute; left: 1554px; top: 884px; color: #bab9b8; white-space: nowrap; }
.wm1 { font-size: 24.500px; line-height: 37px; letter-spacing: -.25px; }
.wm2 { font-size: 18px; line-height: 22px; letter-spacing: -.3px; }
```
